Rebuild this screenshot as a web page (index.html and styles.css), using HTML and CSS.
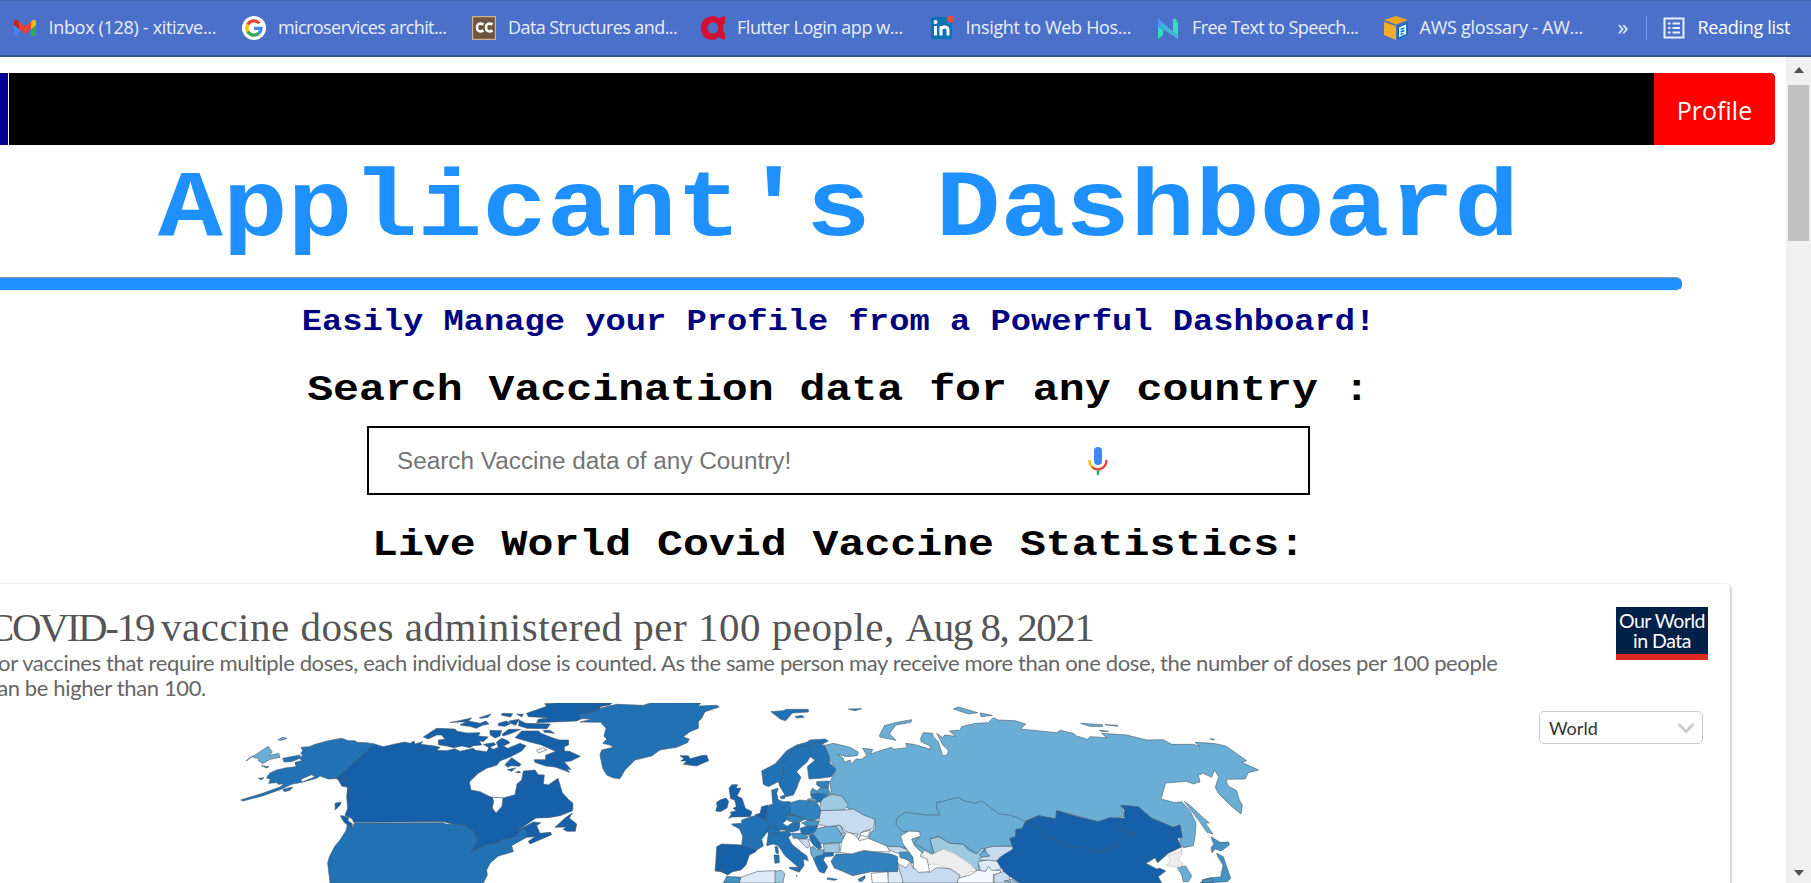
FILE: index.html
```html
<!DOCTYPE html>
<html lang="en">
<head>
<meta charset="utf-8">
<title>Applicant's Dashboard</title>
<link rel="stylesheet" href="styles.css">
</head>
<body>
<header class="bookmarks">
  <div class="bookmark-list">
    <div class="bookmark"><svg class="icon" viewBox="0 0 24 24"><path fill="#4285f4" d="M1 7l5 4v9H2.500Q1 20 1 18.500z"/><path fill="#34a853" d="M23 7l-5 4v9h3.500q1.500 0 1.500-1.500z"/><path fill="#c5221f" d="M1 9V6q0-3 3-2l2 1.500V13L1 9z"/><path fill="#fbbc04" d="M23 9V6q0-3-3-2l-2 1.500V13l5-4z"/><path fill="#ea4335" d="M6 5.500l6 5 6-5V13l-6 5-6-5z"/></svg><span class="t1">Inbox (128) - xitizve...</span></div>
    <div class="bookmark"><svg class="icon" viewBox="0 0 24 24"><circle cx="12" cy="12" r="12" fill="#fff"/><g fill="none" stroke-width="3.200"><path stroke="#ea4335" d="M5.800 8.500A7.200 7.200 0 0 1 17.400 7.300"/><path stroke="#fbbc05" d="M5.800 8.500a7.200 7.200 0 0 0 0 7.200"/><path stroke="#34a853" d="M5.800 15.700a7.200 7.200 0 0 0 11 1.600"/><path stroke="#4285f4" d="M16.800 17.300a7 7 0 0 0 2.300-4.900H12"/></g></svg><span class="t2">microservices archit...</span></div>
    <div class="bookmark"><svg class="icon" viewBox="0 0 24 24"><path fill="#6f533f" stroke="#d2b08c" stroke-width="1.200" d="M.6.600h22.800v22.800H.6z"/><g fill="none" stroke="#fff" stroke-width="2.600"><path d="M11.500 8.500C8 6.500 5 8 5 11.500s3 5 6.500 3"/><path d="M20.500 8.500c-3.500-2-6.500-.5-6.500 3s3 5 6.500 3"/></g></svg><span class="t3">Data Structures and...</span></div>
    <div class="bookmark"><svg class="icon" viewBox="0 0 24 24"><path fill="#d30f35" fill-rule="evenodd" d="M12 0q4 0 6 2.500Q19 .5 24 .5v6q-2 1-2 5.500t2 6v5.500q-5 0-6.500-3Q15 24 11 24 0 23 0 12T12 0zm0 6.500C5 6.500 5 17.500 12 17.500S19 6.500 12 6.500z"/></svg><span class="t4">Flutter Login app w...</span></div>
    <div class="bookmark"><svg class="icon" viewBox="0 0 24 24"><rect y="1" x="1" width="21" height="22" rx="2.500" fill="#0a73b5"/><g fill="none" stroke="#fff" stroke-width="3"><path d="M5.500 10v9.500M11 19.500V10M11 14c0-4 7-4 7 0v5.500"/></g><circle cx="5.500" cy="6" r="2" fill="#fff"/><circle cx="20.500" cy="3" r="3.400" fill="#ef4b3f"/></svg><span class="t5">Insight to Web Hos...</span></div>
    <div class="bookmark"><svg class="icon" viewBox="0 0 24 24"><path fill="#2fe3b5" d="M2 9l5 4v6l-5 4zM17 6h5v17l-5-4zM17 2l5 2.500-5 2.500z"/><path fill="#5a8df5" d="M2 2l10 9-4 4-6-4z"/><path fill="#41b7d8" d="M6 7l16 12v4L4 11z"/></svg><span class="t6">Free Text to Speech...</span></div>
    <div class="bookmark"><svg class="icon" viewBox="0 0 24 24"><path fill="#f2ae2b" d="M0 6l12 4v14L0 19z"/><path fill="#eba51f" d="M12 0l12 4-12 4.500L0 4z"/><path fill="#1272b8" d="M13 10l11-4v13l-11 5z"/><path fill="#fff" d="M15 11.500l7-3v9.500l-7 3z"/><path stroke="#1272b8" stroke-width="1.400" d="M16.500 13.500l4-1.500m-4 4l4-1.500m-4 4l3-1.200"/></svg><span class="t7">AWS glossary - AW...</span></div>
  </div>
  <span class="more">»</span>
  <div class="reading"><svg class="icon" viewBox="0 0 24 24"><g fill="none" stroke="#e6edfb" stroke-width="2"><path d="M2.500 2.500h19v19h-19z"/><path d="M6 7.500h2.500M10.500 7.500H18M6 12h2.500M10.500 12H18M6 16.500h2.500M10.500 16.500H18"/></g></svg><span class="t8">Reading list</span></div>
</header>
<div class="viewport">
  <main class="page">
    <nav class="navbar"><span class="nav-tab"></span><a class="profile">Profile</a></nav>
    <section class="hero">
      <h1>Applicant's Dashboard</h1>
      <div class="rule"></div>
      <h3>Easily Manage your Profile from a Powerful Dashboard!</h3>
      <h2 class="search-title">Search Vaccination data for any country :</h2>
      <div class="search"><span class="hint">Search Vaccine data of any Country!</span>
        <svg class="mic" viewBox="0 0 20 28"><rect x="6" y="0" width="8" height="18" rx="4" fill="#4285f4"/><g fill="none" stroke-width="2.400"><path stroke="#fbbc05" d="M1.500 13q0 5 3 7.200"/><path stroke="#ea4335" d="M4.200 20.200c5 4.500 14.300 1.500 14.300-7.200"/><path stroke="#34a853" d="M10 22.500V28"/></g></svg>
      </div>
      <h2 class="stats-title">Live World Covid Vaccine Statistics:</h2>
    </section>
    <section class="card">
      <div class="card-head">
        <div class="card-copy">
          <div class="chart-title"><span class="topic">COVID-19 </span>vaccine doses administered per 100 people, <span class="date">Aug 8, 2021</span></div>
          <p class="chart-note">For vaccines that require multiple doses, each individual dose is counted. As the same person may receive more than one dose, the number of doses per 100 people<br>can be higher than 100.</p>
        </div>
        <div class="owid">Our World<br>in Data</div>
      </div>
      <div class="chart">
        <svg class="map" viewBox="0 703 1539 180">
          <g class="land" transform="translate(220 690) scale(.33333)">
            <path class="c2" d="M463 162L440 158 411 157 405 152 385 152 365 145 325 152 285 163 268 170 243 172 248 182 242 190 248 196 239 203 245 212 225 217 228 230 200 233 170 240 150 249 139 263 151 268 146 280 170 278 175 283 192 281 180 291 130 309 62 330 70 333 130 317 180 299 215 283 245 277 243 268 275 254 285 260 245 277 290 265 300 258 325 267 350 266z"/>
            <path class="c2" d="M188 205L240 195 240 205 214 215 192 216zM188 298L218 291 210 301 193 305zM115 265l17-2-8 7zM124 227l23 3-7 4z"/>
            <path class="c5" d="M78 213L110 192 145 169 156 185 149 197 176 190 180 202 150 208 128 221 115 212 116 204 104 204 97 198zM174 150l14-8 13 3-15 6z"/>
            <path class="c1" d="M463 162L490 170 525 162 555 156 570 160 582 153 585 162 608 155 602 163 645 168 660 172 650 181 680 182 705 176 720 184 760 175 767 181 800 185 808 171 820 178 835 172 829 157 845 145 860 150 870 158 850 168 863 175 900 160 918 167 905 183 870 201 840 213 830 226 800 235 775 250 748 276 753 300 780 305 810 320 825 323 847 325 885 314 891 282 905 270 910 243 945 240 955 254 973 255 970 282 985 285 1014 265 1027 308 1045 328 1059 340 1058 362 1020 377 985 383 948 384 895 420 940 396 962 398 950 407 960 430 992 427 995 434 930 462 925 454 945 440 920 442 895 433 880 443 820 463 795 468 752 487 755 470 770 450 760 425 735 407 700 403 670 395 400 397 375 375 383 355 380 320 383 290 350 265z"/>
            <path class="c2" d="M388 399L670 398 678 402 700 403 735 407 760 425 770 450 766 465 752 487 795 468 800 462 830 460 850 446 880 445 895 430 897 420 918 417 920 442 875 467 880 485 835 498 810 520 800 540 802 555 790 579 330 579 323 520 328 500 345 468 360 450 378 422 382 403z"/>
            <path class="c1" d="M350 262l37 10-4 15 12 7-1 15 5 7-10 10-6-20 1-14-18-3zM345 340l18-4-2 8-15 16zM361 377l12 1 18 10 3 25-22-16zM610 141L650 115 705 117 712 124 740 129 780 128 775 138 805 141 790 155 778 152 785 165 760 167 750 173 725 168 700 173 680 168 655 164 655 150 675 148 665 135 650 135 625 147zM690 98l65-14-12 11-23 1-30 1zM720 104l25-11 35 7 18-7 9 9-20 4-18 9-20-6-18-2zM778 83l35-11-9 10-22 3zM835 100l25-7 12 8-17 8-20-2zM847 70l31 1-6 10-16-3-12-3zM890 72l20 1-5 8zM810 121l35 1-5 16-15 6-15-10zM846 133l20-15 36 0-27 12-26 8zM867 93l30-5-10 18-15-6zM897 90l20 10 74 2-10 14-60-1-25-8zM920 70l60-21-6-8 50-3 116-1 0 24-70 32-120 5 5-10 30-5-60-3zM970 121l20 0 13 9-30-3zM790 163l32-5 5 6-20 9zM885 143l20-20 50 0 8 7 36 14 20 6 27 0 0 15-13 5 0 13 15 1 33 15-28 14-20 2 20 24-12-2 8 10-44-16-28-3-32-11-3-8 35 0 0-13 30-12-45-20-30-7zM855 224l20-21 28 20-5 6-25-2-10 5zM862 239l25-5-12 10zM887 247l10-4 5 5-9 0zM1005 412l30-28 22-15-9 15 22 18-4 22-25 0-12-6 10-7z"/>
            <path class="water" d="M817 322l4 12-4 20 11 15 18-20 3-26zM950 180l20-7 10 7-24 9zM386 380l-2 12 14 10-3 15 8-16-6-13z"/>
          </g>
          <g class="land" transform="translate(860 690) scale(.33333)">
            <path class="c5" d="M-108 167L-80 160-30 172-5 186-8 197-40 200-67 193-50 205-47 217-30 210-26 223-12 207 5 208 20 196 8 175 38 178 32 192 60 182 95 172 100 178 142 173 137 160 160 163 213 178 210 168 183 155 182 145 190 128 218 130 220 140 235 155 243 180 248 197 260 196 266 182 248 165 241 150 230 130 248 143 254 135 287 139 268 123 300 121 305 110 345 100 385 98 400 83 415 90 465 92 497 102 482 117 540 123 590 128 600 121 640 130 650 138 683 148 690 140 740 143 725 130 800 135 860 150 910 149 935 163 1000 163 1020 170 1005 157 1060 160 1098 168 1160 212 1145 217 1196 240 1165 248 1155 267 1105 268 1098 272 1105 288 1130 302 1138 330 1147 345 1143 372 1110 345 1075 310 1066 292 1076 260 1063 240 1055 262 1030 250 1015 255 1020 275 1000 282 980 274 917 279 903 327 945 338 965 335 990 362 1008 400 1005 440 1000 467 970 473 960 455 960 405 940 412 875 385 785 347 793 380 750 388 715 395 590 362 587 387 535 377 497 394 480 470 340 540 130 470 160 490 120 484 100 470 60 464 25 445 30 430 45 415 45 388 10 385-40 352-85 320-90 275-72 240-90 210z"/>
            <path class="c5" d="M58 137l15-30 37-10 45-8-2 8-45 8-20 26 20 20-48-10zM280 57l15-6 58 17-28 4zM361 69l36 7-34 4zM662 100l65 4 0 6-38-1zM735 104l38 2 0 3zM718 121l28 3-20 1zM1050 146l14 2-6 2zM973 334l20 15 43 40 12 10-12 0 23 33-18-5-23-33z"/>
            <path class="c5" d="M110 385L135 367 200 375 240 375 230 355 230 338 295 322 310 332 345 340 365 333 417 372 450 375 497 394 486 417 465 420 467 440 448 445 462 468 395 470 370 485 350 492 310 463 270 460 235 440 210 447 222 490 205 485 163 460 180 438 150 425 130 425 108 405z"/>
            <path class="c6" d="M210 447L235 440 270 460 310 463 325 480 350 492 365 475 375 477 358 495 380 510 355 518 358 542 320 528 250 478 222 490z"/>
            <path class="cn" d="M185 493l10-11 20 12 35-17 35 14 45 31 20 20-25 5-18 16-30-23-30-10-25-8-25 3z"/>
            <path class="c8" d="M375 475l25-6 62 0-8 17-35 16-4 13-55-5-2-7 32-5-10-8z"/>
            <path class="c9" d="M353 515l30-5 32 4 8 22-25 8-35 0zM85 543l40-10 12 30-10 16-45 0z"/>
            <path class="c10" d="M290 566l38-10 25-15 25 3 7-15 10 12 28 0-5 12-18 0 0 26-105 0zM33 550l50-5 2 34-48 0z"/>
            <path class="c8" d="M130 579l-10-35-8-25 25 15 15-19 8 20 50 12 20-14 40 3 30 20-10 23zM402 554l30-10 15 12 5 23-50 0z"/>
            <path class="c6" d="M432 573l25-5 20 11z"/>
            <path class="c1" d="M497 394L535 377 587 387 590 362 660 382 715 395 750 383 793 385 793 360 782 346 835 350 875 385 940 412 960 405 967 442 952 445 965 471 925 490 893 518 885 503 870 513 858 520 890 537 900 535 917 543 895 560 905 579 480 579 450 560 430 543 410 512 430 495 460 477 450 447 467 440 469 417 486 417z"/>
            <path class="line" d="M497 394l48 27 10 20 55 18 10 13 45 0 48 15 35-12 25-3-3-15 30-20 28-5-50-15-3-8-10-12"/>
            <path class="c4" d="M1053 440l27 17 26-1 2 9-25 18-17-6-10 11-3-15 8-10zM1070 490l20 10 22 65-10 10-75 4 0-10 25-6 30-2 7-35-15-25zM1020 579l15-10 20-5 5 15z"/>
            <path class="c5" d="M952 532l25-4 18 30-10 17-15 0-5-20z"/>
            <path class="cn" d="M965 472l-5 15-35 8 5 20-10 12 40 5 10-10-15-12 10-18z"/>
            <path class="c1" d="M0 565l15-8 0 8-10 5z"/>
          </g>
          <g class="land" transform="translate(580 690) scale(.33333)">
            <path class="c2" d="M0 73L45 64 60 55 110 43 190 46 215 38 362 39 355 48 410 46 418 51 375 65 365 85 355 95 355 115 330 125 310 140 328 148 322 158 290 172 240 180 215 198 165 210 135 240 120 266 100 264 80 255 68 235 60 195 65 180 100 172 90 165 68 160 80 148 72 138 78 115 62 97 0 96 35 88 0 85z"/>
            <path class="c1" d="M0 38L95 39 90 45 60 50 0 65zM300 197l25 0 5 9 38-10 12 0 6 16-36 16-40-5 10-10-18 0 10-7z"/>
            <path class="c2" d="M573 65l35-3 12-4 65 0 0 8-48 3-20 23-15-4zM645 80l20-4 8 6-22 2zM545 243L585 222 620 182 650 165 680 157 690 150 735 147 745 153 725 163 735 170 748 200 750 220 768 238 755 260 720 265 687 267 682 230 705 210 690 200 682 215 660 235 650 245 663 262 655 280 650 295 640 315 618 320 600 290 595 275 565 290 550 283z"/>
            <path class="c3" d="M805 57l40-1-20 6z"/>
            <path class="line" d="M600 280l10-30-3-30 20-25 15-20 40-8 8 0 15-10 20 0 10 10M682 170l12 15 0 15"/>
            <path class="c3" d="M710 275l38-2-3 22-20-2-15-8z"/><path class="c4" d="M692 305l5-10 15 8 10-12 22 3 8 20-60 0z"/>
            <path class="c2" d="M692 315l25-6 28 8-8 20-25-1-15-11z"/>
            <path class="c5" d="M683 327l22-2 5 8-27 0zM703 417l45-9 18 0 25 30 0 20-85 3-13-20z"/>
            <path class="c6" d="M730 325l25-12 30 5 20 27-13 15-75 4 5-28zM730 462l48-3 0 28-45 3zM766 408l14-5 15 30-5 5z"/>
            <path class="c8" d="M722 362L793 360 820 357 850 375 885 388 880 415 848 425 835 450 823 443 835 432 800 428 780 405 745 410 715 403z"/>
            <path class="c1" d="M447 295l8-11 18 0-5 10 15 1-12 23 15 7 10 30 20 10-5 15-55 1-10 4 8-12-3-6 18-5-10-7 10-5-5-20-12-4zM420 330l18-6 8 10-5 20-20 11-14-2 5-15-3-10z"/>
            <path class="c1" d="M410 470l15-8 60 3 45 10-2 10-20 10-10 30-15 15-25 5-15 10-20-10-18-2 2-20z"/>
            <path class="line" d="M413 480l22 2-5 20 3 45"/>
            <path class="c2" d="M455 402l30-2 0-10 45-15 15-5 20 15 15 10 0 15-20 18-15 20 5 20-20 12-45-12 3-30-10-22-20-10z"/>
            <path class="c1" d="M540 370l5-20 20-5 0 25-10 20-15-8-15-8z"/>
            <path class="c2" d="M575 300l20-5-5 15 5 20 15 5 20 0 8 45-18 10-12 10 15 10-5 10-50 0-5-25-5-25 10-25 10-2zM600 320l15-5 0 10-10 2zM565 430l20-10 15 5 25-3 10 12-10 8 10 20 30 25 15 10 5 15-15-5 2 20-15 20-2-15-40-35-20-30-15-5-20 5z"/>
            <path class="c2" d="M560 418l20-8 20 10-8 12-25 2zM620 410l20-14 20 3-3 22-20 5-20-2zM660 415l25-8 30-2-10 20-20 10-20-2zM688 435l13-2 20 28 4 13-10 4-15-13-10-15zM705 490l30-2 25 0 0 10-25 2-5 10 13 20-10 20-15-5-10-20-8-20zM585 470l8 0 3 20-8 0zM582 495l15 0 1 23-13 2zM627 532l33 0-5 14-25-10zM648 556l4 2-2 2zM742 563l30 5-10 3-20-3z"/>
            <path class="c3" d="M630 338l30-8 50 5 12 25-5 25-25 10-60-22zM620 375l25 0 30 13-20 10-30-5zM768 492l45 0 40-10 80 10 20 8 0 45-80 0-55 12-30-13-25-10-10-20zM835 567l20-5-8 12-10 0z"/>
            <path class="c4" d="M665 398l25-7 27 2-8 15-30 0zM635 430l30 0 20 10-10 10-25-5-10 0zM430 579l10-20 45 3-4 17z"/>
            <path class="c8" d="M655 447l30 0 5 22-10 5zM780 433l15-5 0 12z"/>
            <path class="c5" d="M690 473l10-4 10 10 20 0 0 16-22 4-5 10-10-15z"/>
            <path class="c9" d="M478 579l5-17 50-18 55-2 2 37z"/><path class="c6" d="M585 544l20-3 10 10-4 15-2 13-24 0z"/>
            <path class="c8" d="M908 470l50 0 30 12 0 12-40-5z"/><path class="c4" d="M958 487l32-2 18 17-10 18-20-12-18-5z"/>
            <path class="water" d="M780 487L785 455 800 425 825 435 838 452 865 445 920 468 930 485 880 485 852 481 815 492zM842 428l30-7-10 20-20-5z"/>
            <path class="water" d="M962 437l25-14 32 2 2 14-26 8 8 20 22 20-4 12 20 8 8 38-33 2-15-15-2-30-30-40z"/>
          </g>
        </svg>
        <div class="select"><span>World</span><svg class="chevron" viewBox="0 0 18 12"><path d="M1.500 2L9 9.500 16.500 2"/></svg></div>
      </div>
    </section>
  </main>
  <aside class="scrollbar"><i class="arrow up"></i><i class="thumb"></i><i class="arrow down"></i></aside>
</div>
</body>
</html>
```
FILE: styles.css
```css
* { box-sizing: border-box; }
body { margin: 0; height: 883px; overflow: hidden; background: #fff; display: flex; flex-direction: column; }
.bookmarks { height: 57px; flex: none; background: #4b70c9; border-top: 1px solid #4767ae; border-bottom: 2px solid #34508f; display: flex; align-items: center; color: #e9eefa; font: 18px/24px "Open Sans", sans-serif; white-space: nowrap; }
.bookmark-list { display: grid; grid-template-columns: 229.500px 230px 229px 228.500px 226.500px 227.500px 234px; margin-left: 12.500px; width: 1605px; flex: none; }
.bookmark { display: flex; align-items: center; gap: 12px; }
.bookmark span, .reading span { padding-bottom: 2px; }
.t1, .t5, .t8 { letter-spacing: -.32px; }
.t2 { letter-spacing: -.58px; }
.t3, .t6 { letter-spacing: -.58px; }
.t4 { letter-spacing: -.42px; }
.t7 { letter-spacing: -.25px; }
.icon { width: 24px; height: 24px; flex: none; }
.more { width: 28px; font-size: 22px; line-height: 20px; padding-bottom: 5px; }
.reading { display: flex; align-items: center; gap: 12px; border-left: 1px solid #7c98da; height: 24px; padding-left: 15px; color: #fff; }
.viewport { flex: 1; display: flex; min-height: 0; }
.page { width: 1786px; height: 826px; overflow: hidden; padding-top: 16px; }
.navbar { width: 1775px; height: 72px; background: #000; border-radius: 0 5px 5px 0; overflow: hidden; display: flex; justify-content: space-between; }
.nav-tab { width: 9px; background: #000096; border-right: 1px solid #fff; }
.profile { width: 121px; background: #f00; color: #fff; font: 25px/75px "Open Sans", sans-serif; text-align: center; }
.hero { width: 1677px; display: flex; flex-direction: column; align-items: center; font-family: "Courier New", "Liberation Mono", monospace; }
/* the headings are drawn slightly flattened, like a wide typewriter face */
.hero h1, .hero h2, .hero h3 { margin: 0; font-weight: bold; white-space: pre; transform: scaleY(.87); }
.hero h1 { font-size: 108px; line-height: 122px; height: 132px; color: #1e90ff; transform-origin: 50% 90px; }
.rule { align-self: flex-start; width: 1682px; height: 14px; background: #1e90ff; border: 1px solid #8a9aa8; border-bottom-color: #eee; border-left: 0; border-right-color: #1e90ff; border-radius: 0 6px 6px 0; }
.hero h3 { font-size: 33.750px; line-height: 38px; height: 72px; padding-top: 11px; color: #000080; transform-origin: 50% 39px; }
.hero h2 { font-size: 43.200px; line-height: 49px; color: #000; }
.hero .search-title { height: 63px; transform-origin: 50% 40px; }
.search { width: 943px; height: 69px; border: 2px solid #000; display: flex; align-items: center; padding-left: 28px; }
.hint { width: 691px; font: 24.320px/30px "Liberation Sans", Arial, sans-serif; color: #757575; }
.mic { width: 20px; height: 28px; }
.hero .stats-title { height: 89px; padding-top: 24px; transform-origin: 50% 62px; }
.card { width: 1750px; height: 320px; margin-left: -20px; padding: 23px 22px 0 7px; border-radius: 4px; box-shadow: 0 0 2px rgba(0,0,0,.22), 2px 2px 2px rgba(0,0,0,.14); }
.card-head { display: flex; justify-content: space-between; height: 96px; }
.card-copy { white-space: nowrap; }
.chart-title { font: 41px/40px "Liberation Serif", serif; color: #555; height: 43px; letter-spacing: .5px; }
.topic { letter-spacing: -2.300px; }
.date { letter-spacing: -1.450px; }
.chart-note { margin: 0; font: 22px/25px Lato, sans-serif; color: #666; letter-spacing: -.37px; }
.owid { width: 92px; height: 53px; background: #002147; border-bottom: 6px solid #dc2a20; color: #fff; font: 19.500px/20px Lato, sans-serif; letter-spacing: -.5px; text-align: center; padding-top: 4px; white-space: nowrap; }
.chart { display: flex; margin-left: 13px; align-items: flex-start; }
.map { width: 1539px; height: 180px; flex: none; }
.land path { stroke: #4c5965; stroke-width: 1.800; stroke-linejoin: round; }
.land .c1 { fill: #1560a9; } .land .c2 { fill: #2171b5; } .land .c3 { fill: #3182bd; } .land .c4 { fill: #4292c6; }
.land .c5 { fill: #6aaed6; } .land .c6 { fill: #9ecae1; } .land .c8 { fill: #c6dbef; } .land .c9 { fill: #deebf7; }
.land .c10 { fill: #f5faff; } .land .cn { fill: #ededed; stroke: #bbb; } .land .line { fill: none; } .land .water { fill: #fff; }
.select { width: 164px; height: 33px; margin-top: 8px; flex: none; border: 1px solid #ccc; border-radius: 5px; display: flex; align-items: center; justify-content: space-between; padding: 0 7px 0 9px; font: 18px/30px Lato, sans-serif; color: #333; }
.chevron { width: 18px; height: 12px; fill: none; stroke: #ccc; stroke-width: 3; }
.scrollbar { width: 25px; flex: none; background: #f0f0f0; display: flex; flex-direction: column; align-items: center; padding: 10px 0 7px; }
.arrow { border: 5.500px solid transparent; width: 0; }
.up { border-top: 0; border-bottom: 6px solid #505050; }
.down { border-bottom: 0; border-top: 6px solid #505050; margin-top: auto; }
.thumb { width: 21px; height: 156px; background: #c1c1c1; margin-top: 12px; }
```
